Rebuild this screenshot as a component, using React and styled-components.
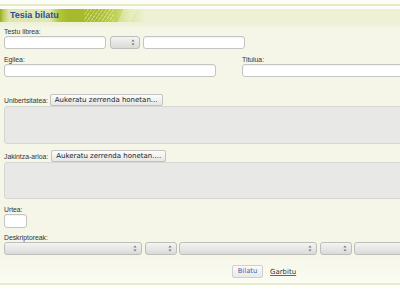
import React from "react";
import styled, { createGlobalStyle } from "styled-components";

const Global = createGlobalStyle`
  html, body { margin: 0; padding: 0; background: #ffffff; overflow: hidden; }
  body { font-family: "Liberation Sans", Arial, sans-serif; }
`;

const Page = styled.div`
  width: 400px;
  height: 300px;
  overflow: hidden;
  background: #ffffff;
`;

const TopStrip = styled.div`
  width: 460px;
  height: 9px;
  box-sizing: border-box;
  padding-top: 4px;
  background: #fcfdf6;
  &::before {
    content: "";
    display: block;
    height: 2px;
    background: #e6eac6;
  }
`;

const Band = styled.div`
  width: 460px;
  height: 13px;
  display: flex;
  align-items: center;
  padding-left: 10px;
  box-sizing: border-box;
  background:
    repeating-linear-gradient(125deg, rgba(255,255,255,0.35) 0 1px, transparent 1px 3px) 84px 0 / 30px 100% no-repeat,
    linear-gradient(115deg, transparent 0 112px, rgba(255,255,255,0.25) 112px 124px, transparent 124px) 0 0 / 100% 100% no-repeat,
    linear-gradient(to right, #97ad22 0, #b9c95a 3px, #dfe6b2 9px, #e1e8b8 50px, #b7c840 58px, #a5b92b 68px, #a9bc2e 98px, #c2d25a 116px, #dde6a6 130px, #eef1d4 145px, #eef1d4 100%);
`;

const Title = styled.span`
  font-family: "Liberation Sans", Arial, sans-serif;
  font-weight: bold;
  font-size: 9px;
  color: #2b4c9b;
  line-height: 13px;
`;

const Panel = styled.div`
  width: 460px;
  height: 261px;
  box-sizing: border-box;
  padding: 5px 0 0 4px;
  display: flex;
  flex-direction: column;
  background: linear-gradient(to bottom, #edf0d3 0, #f5f6e7 7px, #f5f6e7 calc(100% - 34px), #fbfcf3 100%);
`;

const BottomLine = styled.div`
  width: 460px;
  height: 2px;
  background: #e8ecc8;
`;

const Label = styled.div`
  font-size: 6.8px;
  line-height: 9px;
  color: #333;
  margin-top: ${p => p.$mt || 0}px;
`;

const Row = styled.div`
  display: flex;
  align-items: center;
  gap: ${p => p.$gap || 0}px;
  margin-top: ${p => p.$mt || 0}px;
`;

const Column = styled.div`
  display: flex;
  flex-direction: column;
  width: ${p => p.$w}px;
`;

const TextInput = styled.div`
  width: ${p => p.$w}px;
  height: 13px;
  box-sizing: border-box;
  background: #ffffff;
  border: 1px solid #c4c4c0;
  border-radius: 3px;
  box-shadow: inset 0 1px 1px rgba(0,0,0,0.05);
  margin-right: ${p => p.$mr || 0}px;
`;

const SelectBox = styled.div`
  width: ${p => p.$w}px;
  height: 13px;
  box-sizing: border-box;
  border: 1px solid #bdbdbb;
  border-radius: 3px;
  background: linear-gradient(to bottom, #f4f4f3, #dadad9);
  display: flex;
  align-items: center;
  justify-content: flex-end;
  padding-right: 4px;
  margin-right: ${p => p.$mr || 0}px;
  flex-shrink: 0;
`;

const PickButton = styled.div`
  height: 12px;
  box-sizing: border-box;
  padding: 0 4px;
  margin-left: ${p => p.$ml || 2}px;
  border: 1px solid #c2c2c0;
  border-radius: 2px;
  background: linear-gradient(to bottom, #fdfdfd, #e6e6e4);
  font-family: "DejaVu Sans", Verdana, sans-serif;
  font-size: 7px;
  line-height: 10px;
  color: #222;
  white-space: nowrap;
`;

const GreyBox = styled.div`
  width: 450px;
  height: ${p => p.$h}px;
  box-sizing: border-box;
  background: #e8e8e6;
  border: 1px solid #d5d5d1;
  border-radius: 3px;
`;

const SmallInput = styled(TextInput)`
  height: 14px;
`;

const Actions = styled.div`
  display: flex;
  align-items: center;
  padding-left: 228px;
  margin-top: 10px;
  gap: 7px;
`;

const SubmitButton = styled.div`
  width: 31px;
  height: 13px;
  box-sizing: border-box;
  border: 1px solid #cfcfcd;
  border-radius: 2px;
  background: linear-gradient(to bottom, #fbfbfb, #e9e9e8);
  font-family: "DejaVu Sans", Verdana, sans-serif;
  font-size: 6.8px;
  line-height: 11px;
  text-align: center;
  color: #3f65b3;
`;

const ResetLink = styled.span`
  font-family: "DejaVu Sans", Verdana, sans-serif;
  font-size: 7px;
  color: #333;
  text-decoration: underline;
  text-decoration-color: #666;
`;

const Arrows = () => (
  <svg width="4" height="7" viewBox="0 0 4 7">
    <path d="M2 0.5 L3.6 2.5 L0.4 2.5 Z" fill="#777" />
    <path d="M2 6.5 L3.6 4.5 L0.4 4.5 Z" fill="#777" />
  </svg>
);

const Select = ({ w, mr }) => (
  <SelectBox $w={w} $mr={mr}>
    <Arrows />
  </SelectBox>
);

export default function App() {
  return (
    <Page>
      <Global />
      <TopStrip />
      <Band>
        <Title>Tesia bilatu</Title>
      </Band>
      <Panel>
        <Label>Testu librea:</Label>
        <Row>
          <TextInput $w={102} $mr={4} />
          <Select w={30} mr={3} />
          <TextInput $w={102} />
        </Row>

        <Row $mt={6} style={{ alignItems: "flex-start" }}>
          <Column $w={238}>
            <Label>Egilea:</Label>
            <TextInput $w={212} />
          </Column>
          <Column $w={200}>
            <Label>Titulua:</Label>
            <TextInput $w={200} />
          </Column>
        </Row>

        <Row $mt={17}>
          <Label>Unibertsitatea:</Label>
          <PickButton $ml={2}>Aukeratu zerrenda honetan...</PickButton>
        </Row>
        <GreyBox $h={38} />

        <Row $mt={6}>
          <Label>Jakintza-arloa:</Label>
          <PickButton $ml={3}>Aukeratu zerrenda honetan....</PickButton>
        </Row>
        <GreyBox $h={37} />

        <Label $mt={6}>Urtea:</Label>
        <SmallInput $w={23} />

        <Label $mt={5}>Deskriptoreak:</Label>
        <Row>
          <Select w={138} mr={3} />
          <Select w={32} mr={2} />
          <Select w={138} mr={3} />
          <Select w={32} mr={2} />
          <Select w={138} />
        </Row>

        <Actions>
          <SubmitButton>Bilatu</SubmitButton>
          <ResetLink>Garbitu</ResetLink>
        </Actions>
      </Panel>
      <BottomLine />
    </Page>
  );
}
